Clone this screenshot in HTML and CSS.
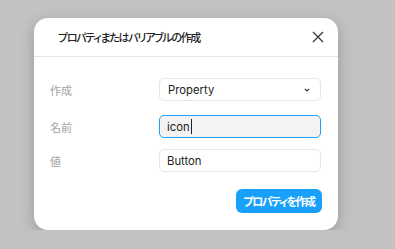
FILE: index.html
```html
<!DOCTYPE html>
<html lang="ja">
<head>
  <meta charset="UTF-8" />
  <title>プロパティまたはバリアブルの作成</title>
  <link rel="stylesheet" href="styles.css">
</head>
<body>

  <div class="dialog">
    <header class="dialog-header">
      <span class="dialog-title">プロパティまたはバリアブルの作成</span>
      <button class="close" aria-label="閉じる">
        <svg width="12" height="12" viewBox="0 0 12 12">
          <path d="M1 1 L11 11 M11 1 L1 11" stroke="#333" stroke-width="1.2" fill="none"/>
        </svg>
      </button>
    </header>

    <div class="form">
      <div class="row row-select">
        <label>作成</label>
        <div class="field select">
          <span>Property</span>
          <svg width="6" height="4" viewBox="0 0 6 4">
            <path d="M0.8 0.8 L3 3 L5.2 0.8" stroke="#333" stroke-width="1.1" fill="none"/>
          </svg>
        </div>
      </div>
      <div class="row row-name">
        <label>名前</label>
        <div class="field focused"><span>icon</span><i class="caret"></i></div>
      </div>
      <div class="row">
        <label>値</label>
        <div class="field"><span>Button</span></div>
      </div>
    </div>

    <div class="actions">
      <button class="primary">プロパティを作成</button>
    </div>
  </div>

</body>
</html>
```

FILE: styles.css
```css
body {
  margin: 0;
  background: #c2c2c2;
  font-family: Inter, "Noto Sans CJK JP", sans-serif;
}

.dialog {
  width: 304px;
  height: 212px;
  margin: 18px 0 0 34px;
  background: #fff;
  border-radius: 14px;
  box-shadow: 0 4px 14px rgba(0, 0, 0, 0.22);
  box-sizing: border-box;
}

.dialog-header {
  height: 39px;
  box-sizing: border-box;
  border-bottom: 1px solid #e6e6e6;
  display: flex;
  align-items: center;
  justify-content: space-between;
  padding: 0 14px 0 24px;
}

.dialog-title {
  font-family: "Noto Sans CJK JP", sans-serif;
  font-feature-settings: "palt";
  font-size: 11px;
  font-weight: 500;
  letter-spacing: -1.3px;
  color: #222;
}

.close {
  background: none;
  border: none;
  padding: 0;
  width: 12px;
  height: 12px;
  display: flex;
}

/* Form rows */
.form {
  padding: 21px 17px 0 16px;
}

.row {
  display: grid;
  grid-template-columns: 109px 1fr;
  align-items: center;
}

.row-select {
  margin-bottom: 14px;
}

.row-name {
  margin-bottom: 11px;
}

.row label {
  font-family: "Noto Sans CJK JP", sans-serif;
  font-size: 11px;
  color: #a3a3a3;
}

.field {
  height: 23px;
  box-sizing: border-box;
  border: 1px solid #e6e6e6;
  border-radius: 5px;
  display: flex;
  align-items: center;
  padding: 0 8px 0 7px;
  font-size: 11.3px;
  color: #222;
}

.select {
  justify-content: space-between;
  padding-left: 8px;
  padding-right: 10px;
}

.focused {
  border-color: #18a0fb;
  background: #f3f3f3;
}

.caret {
  display: inline-block;
  width: 1px;
  height: 15px;
  background: #222;
  margin-left: 1px;
}

.actions {
  display: flex;
  justify-content: flex-end;
  padding: 17px 16px 0 0;
}

.primary {
  height: 24px;
  width: 86px;
  border: none;
  border-radius: 6px;
  background: #18a0fb;
  color: #fff;
  font-family: "Noto Sans CJK JP", sans-serif;
  font-feature-settings: "palt";
  font-size: 11px;
  font-weight: 700;
  letter-spacing: -1.5px;
  padding: 0;
}
```
